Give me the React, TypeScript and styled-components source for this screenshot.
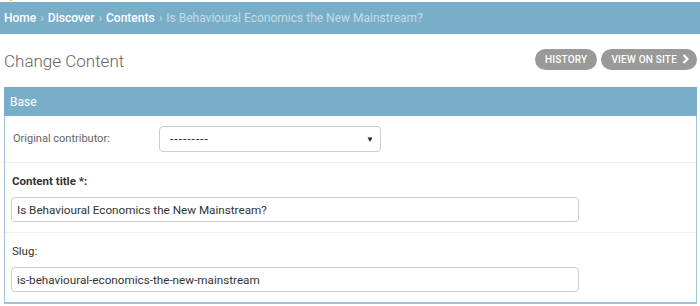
import { FunctionComponent, ReactNode } from "react";
import styled, { createGlobalStyle } from "styled-components";

const GlobalStyle = createGlobalStyle`
  html, body {
    margin: 0;
    padding: 0;
    background: #fff;
    font-family: Roboto, "Liberation Sans", Arial, sans-serif;
    color: #333;
  }
`;

type FormRowProps = {
  label: string;
  required?: boolean;
  inline?: boolean;
  children: ReactNode;
};

const FormRow: FunctionComponent<FormRowProps> = ({ label, required, inline, children }) => {
  return (
    <Row $inline={inline}>
      <Label $required={required} $inline={inline}>
        {label}
        {required && " *"}:
      </Label>
      {children}
    </Row>
  );
};

export default function App() {
  return (
    <>
      <GlobalStyle />
      <TopStrip>
        <Spark />
      </TopStrip>
      <Breadcrumbs>
        <Crumb href="#">Home</Crumb>
        <Sep>›</Sep>
        <Crumb href="#">Discover</Crumb>
        <Sep>›</Sep>
        <Crumb href="#">Contents</Crumb>
        <Sep>›</Sep>
        <Current>Is Behavioural Economics the New Mainstream?</Current>
      </Breadcrumbs>
      <Content>
        <TitleBar>
          <Title>Change Content</Title>
          <Tools>
            <ToolButton href="#">History</ToolButton>
            <ToolButton href="#" $withArrow>
              View on site
              <svg width="8" height="10" viewBox="0 0 8 10">
                <path d="M1.5 1 L5.5 5 L1.5 9" fill="none" stroke="#fff" strokeWidth="2.2" />
              </svg>
            </ToolButton>
          </Tools>
        </TitleBar>
        <Fieldset>
          <Legend>Base</Legend>
          <FormRow label="Original contributor" inline>
            <Select>
              <Dashes>---------</Dashes>
              <Caret>▼</Caret>
            </Select>
          </FormRow>
          <FormRow label="Content title" required>
            <TextInput defaultValue="Is Behavioural Economics the New Mainstream?" />
          </FormRow>
          <FormRow label="Slug">
            <TextInput defaultValue="is-behavioural-economics-the-new-mainstream" />
          </FormRow>
        </Fieldset>
      </Content>
    </>
  );
}

const TopStrip = styled.div`
  height: 2px;
  position: relative;
  background: #fff;
`;

const Spark = styled.span`
  position: absolute;
  left: 10px;
  top: 0;
  width: 2px;
  height: 1px;
  background: #f5c518;
`;

const Breadcrumbs = styled.div`
  height: 32px;
  display: flex;
  align-items: center;
  gap: 4px;
  padding: 0 4px;
  background: #79aec8;
  font-size: 12px;
  color: #c4dce8;
`;

const Crumb = styled.a`
  color: #fff;
  font-weight: 500;
  text-decoration: none;
`;

const Sep = styled.span`
  color: #c4dce8;
`;

const Current = styled.span`
  color: #c4dce8;
`;

const Content = styled.div`
  padding: 0 3px 0 4px;
`;

const TitleBar = styled.div`
  display: flex;
  align-items: center;
  justify-content: space-between;
  height: 53px;
`;

const Title = styled.h1`
  margin: 0;
  font-size: 17px;
  font-weight: 300;
  color: #666;
`;

const Tools = styled.div`
  display: flex;
  gap: 4px;
  margin-top: -3px;
`;

const ToolButton = styled.a<{ $withArrow?: boolean }>`
  display: flex;
  align-items: center;
  gap: 5px;
  height: 21px;
  padding: ${({ $withArrow }) => ($withArrow ? "0 7px 0 10px" : "0 10px")};
  border-radius: 11px;
  background: #999;
  color: #fff;
  font-size: 10px;
  font-weight: 500;
  text-transform: uppercase;
  letter-spacing: 0.2px;
  text-decoration: none;
`;

const Fieldset = styled.div`
  border: 1px solid #9ec3d6;
  border-top: none;
  border-bottom-width: 2px;
`;

const Legend = styled.div`
  height: 29px;
  display: flex;
  align-items: center;
  padding: 0 6px;
  margin: 0 -1px;
  background: #79aec8;
  color: #fff;
  font-size: 12px;
`;

const Row = styled.div<{ $inline?: boolean }>`
  display: flex;
  flex-direction: ${({ $inline }) => ($inline ? "row" : "column")};
  align-items: ${({ $inline }) => ($inline ? "center" : "flex-start")};
  gap: ${({ $inline }) => ($inline ? "0" : "8px")};
  padding: 10px 7px 10px 6px;
  border-bottom: 1px solid #eee;
  &:last-child {
    border-bottom: none;
  }
`;

const Label = styled.label<{ $required?: boolean; $inline?: boolean }>`
  width: ${({ $inline }) => ($inline ? "146px" : "auto")};
  padding-left: ${({ $inline }) => ($inline ? "2px" : "1px")};
  font-size: ${({ $inline }) => ($inline ? "11px" : "11.5px")};
  line-height: 16px;
  font-weight: ${({ $required }) => ($required ? 700 : 400)};
  color: ${({ $inline }) => ($inline ? "#666" : "#333")};
`;

const Select = styled.div`
  position: relative;
  width: 222px;
  height: 26px;
  box-sizing: border-box;
  display: flex;
  align-items: center;
  padding: 0 10px;
  border: 1px solid #ccc;
  border-radius: 4px;
  font-size: 12px;
  color: #333;
`;

const Dashes = styled.span`
  letter-spacing: 1px;
`;

const Caret = styled.span`
  position: absolute;
  right: 6px;
  top: 8px;
  font-size: 8px;
  color: #222;
`;

const TextInput = styled.input`
  width: 568px;
  height: 25px;
  box-sizing: border-box;
  padding: 0 5px;
  border: 1px solid #ccc;
  border-radius: 4px;
  font-family: Roboto, "Liberation Sans", Arial, sans-serif;
  font-size: 11.7px;
  color: #333;
  outline: none;
`;
